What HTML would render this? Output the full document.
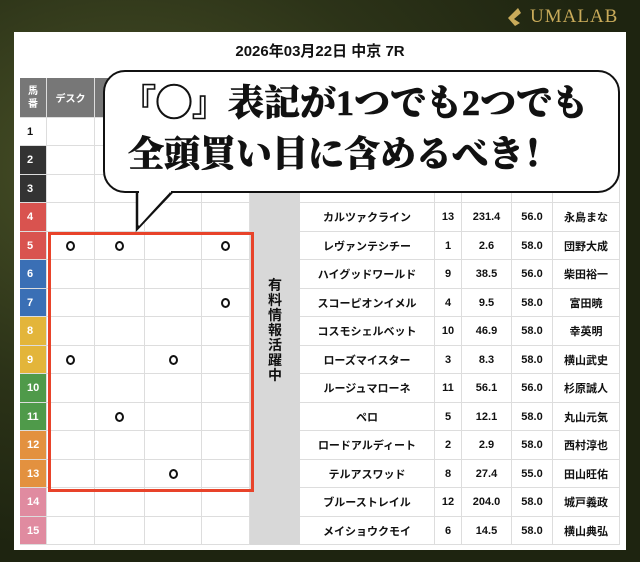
<!DOCTYPE html>
<html><head><meta charset="utf-8"><style>
*{margin:0;padding:0;box-sizing:border-box}
body{width:640px;height:562px;overflow:hidden;position:relative;font-family:"Liberation Sans","Noto Sans CJK JP",sans-serif;
background:radial-gradient(ellipse at 20% 30%,#4a5228 0%,#2c3318 40%,#1e2410 70%),#222a14;}
.logo{position:absolute;left:506px;top:6px;color:#c9ab5a;font-family:"Liberation Serif",serif;font-size:19px;letter-spacing:1px;display:flex;align-items:center;gap:2px}
.card{position:absolute;left:14px;top:32px;width:612px;height:518px;background:#fff}
.title{position:absolute;left:0;top:40px;width:640px;text-align:center;font-weight:bold;font-size:15px;color:#111}
.c{position:absolute;border-right:1px solid #ddd;border-bottom:1px solid #ddd;display:flex;align-items:center;justify-content:center;font-weight:bold;font-size:11px;color:#111}
.n{color:#fff;font-size:11px;justify-content:flex-start;padding-left:7px}
.h{background:#777;color:#fff;font-size:10px}
.gray{position:absolute;left:250px;top:118px;width:50px;height:427px;background:#d8d8d8}
.vt{position:absolute;left:267px;top:278px;width:16px;font-weight:bold;font-size:14px;line-height:15px;color:#111;text-align:center}
.red{position:absolute;left:48px;top:232px;width:206px;height:260px;border:3px solid #e8432a}
.o{font-size:12px}
.o span{display:inline-block;width:9px;height:10px;border:2px solid #111;border-radius:50%}
.bub{position:absolute;left:103px;top:70px;width:517px;height:123px;background:#fff;border:2.5px solid #111;border-radius:22px}
.bt{position:absolute;text-align:left;font-family:"Liberation Serif","Noto Serif CJK SC",serif;font-weight:900;font-size:36px;color:#111;line-height:40px;white-space:nowrap;-webkit-text-stroke:0.6px #111}
</style></head><body>
<div class="logo"><svg width="22" height="20" viewBox="0 0 22 20"><path d="M12 1 L2 11 L9 19 L14 16 L8 12 L15 6 Z" fill="#c9ab5a"/></svg>UMALAB</div>
<div class="card"></div>
<div class="title">2026年03月22日 中京 7R</div>
<div id="t"></div>
<div class="gray"></div>
<div class="vt">有料情報活躍中</div>
<div class="red"></div>
<svg style="position:absolute;left:0;top:0" width="640" height="562">
<path d="M137 191 L137 229 L173 191" fill="#fff" stroke="#111" stroke-width="2.5" stroke-linejoin="miter"/>
</svg>
<div class="bub"></div>
<svg style="position:absolute;left:0;top:0" width="640" height="562"><path d="M139 190 L139 226 L170 192" fill="#fff" stroke="none"/><line x1="139" y1="191.5" x2="171" y2="191.5" stroke="#fff" stroke-width="2"/></svg>
<div class="bt" style="left:120px;top:83px">『◯』表記が1つでも2つでも</div>
<div class="bt" style="left:128px;top:134px">全頭買い目に含めるべき！</div>
<script>
const cols=[20,47,95,145,202,250];
const rc=[300,435,462,512,553,620];
const colors=['#fff','#333','#333','#d9534f','#d9534f','#3a6fb5','#3a6fb5','#e3b53a','#e3b53a','#4f9a4a','#4f9a4a','#e3913f','#e3913f','#e08ba0','#e08ba0'];
const data=[[],[],[],["カルツァクライン","13","231.4","56.0","永島まな"],["レヴァンテシチー","1","2.6","58.0","団野大成"],["ハイグッドワールド","9","38.5","56.0","柴田裕一"],["スコーピオンイメル","4","9.5","58.0","富田暁"],["コスモシェルベット","10","46.9","58.0","幸英明"],["ローズマイスター","3","8.3","58.0","横山武史"],["ルージュマローネ","11","56.1","56.0","杉原誠人"],["ペロ","5","12.1","58.0","丸山元気"],["ロードアルディート","2","2.9","58.0","西村淳也"],["テルアスワッド","8","27.4","55.0","田山旺佑"],["ブルーストレイル","12","204.0","58.0","城戸義政"],["メイショウクモイ","6","14.5","58.0","横山典弘"]];
const marks={5:[0,1,3],7:[3],9:[0,2],11:[1],13:[2]};
let h='';
const c=(x,y,w,hh,cls,txt,st)=>`<div class="c ${cls||''}" style="left:${x}px;top:${y}px;width:${w}px;height:${hh}px;${st||''}">${txt||''}</div>`;
h+=c(20,78,27,40,'h','馬<br>番','flex-direction:column;line-height:13px');
h+=c(47,78,48,40,'h','デスク');
for(let i=2;i<5;i++)h+=c(cols[i],78,cols[i+1]-cols[i],40,'h','');
for(let r=0;r<15;r++){
 const y=Math.round(118+r*28.47),hh=Math.round(118+(r+1)*28.47)-y;
 h+=c(20,y,27,hh,'n',r+1,`background:${colors[r]};${r==0?'color:#111':''}`);
 for(let i=1;i<5;i++){const m=(marks[r+1]||[]).includes(i-1);h+=c(cols[i],y,cols[i+1]-cols[i],hh,'o',m?'<span></span>':'');}
 const d=data[r];
 for(let i=0;i<5;i++)h+=c(rc[i],y,rc[i+1]-rc[i],hh,'',d[i]||'');
}
document.getElementById('t').innerHTML=h;
</script>
</body></html>
